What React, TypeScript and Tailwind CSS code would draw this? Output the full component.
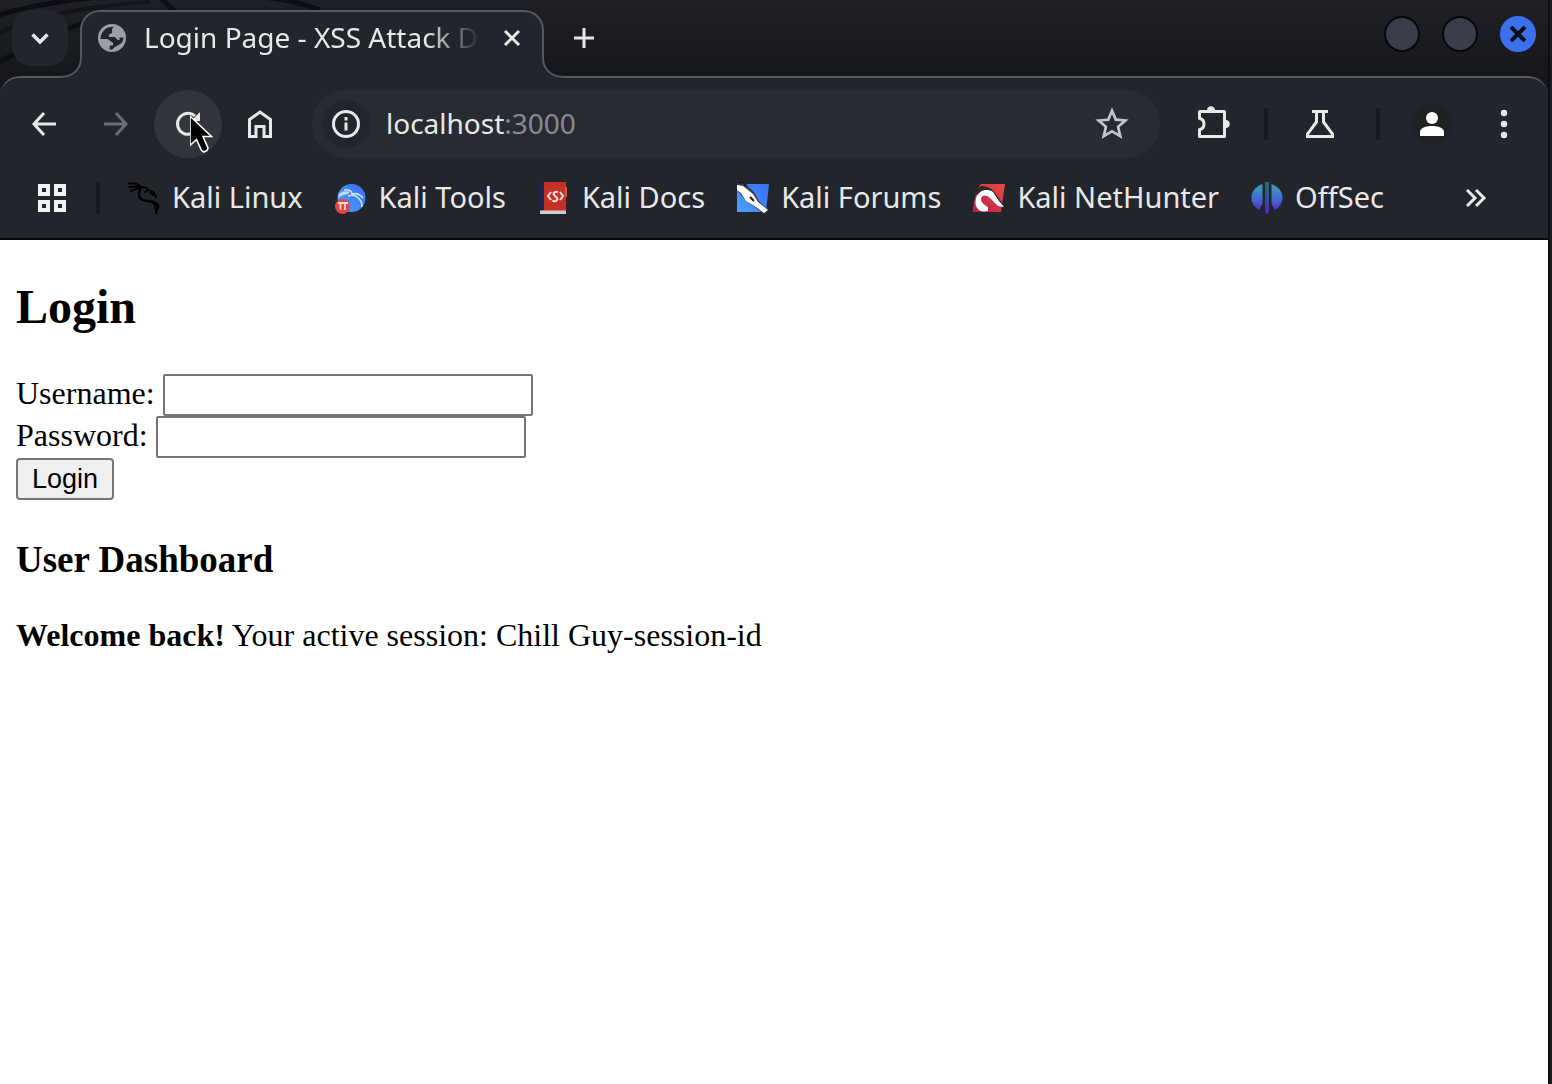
import React from "react";
import { MdStarBorder } from "react-icons/md";

const svg = { fill: "none", stroke: "currentColor", "aria-hidden": true } as const;

function TabBackdrop() {
  return (
    <svg className="absolute inset-0 h-full w-80" viewBox="0 0 320 76" preserveAspectRatio="none" fill="none" aria-hidden="true">
      <path d="M-4 16C40 2 90-2 130-6M-4 64C30 44 70 28 84 22M158-4l18 16M250-4c30 2 50 6 70 14" stroke="#0d0e11" strokeWidth="5" />
      <path d="M-4 34C40 14 90 6 150 2" stroke="#131418" strokeWidth="4" />
    </svg>
  );
}

function Flare({ flip = false }: { flip?: boolean }) {
  return (
    <svg
      className={flip ? "absolute bottom-0 -right-5.5 h-5 w-5.5 -scale-x-100" : "absolute bottom-0 -left-5.5 h-5 w-5.5"}
      viewBox="0 0 22 20"
      aria-hidden="true"
    >
      <path d="M0 20V19C13 19 21 11 21 0H22V20Z" fill="#22252c" />
      <path d="M0 19C13 19 21 11 21 0" fill="none" stroke="#56585d" strokeWidth="2" />
    </svg>
  );
}

function GlobeIcon() {
  return (
    <svg className="size-7 shrink-0" viewBox="0 0 28 28" aria-hidden="true">
      <circle cx="14" cy="14" r="14" fill="#9aa0a6" />
      <path
        d="M10 3.500L15.500 2.500 14 5.500V9L11 10.500V13H17L19.500 16H21.500V13.500H25.500C25.500 17 24 19 21.500 20.500L17 23 14 25.500H11.500L12 21.500H15V19L12.500 17 9.500 15H2.500C2.500 10 5.500 5.500 10 3.500Z"
        fill="#22252c"
      />
      <path d="M3 15.500h6.500l3.500 3v2.500h-2.500v4C6 23.500 3.500 20 3 15.500Z" fill="#9aa0a6" />
    </svg>
  );
}

function ReloadIcon() {
  return (
    <svg {...svg} className="size-7" viewBox="0 0 28 28" strokeWidth="3">
      <path d="M24 17A10.500 10.500 0 1 1 21 6" />
      <path d="M26 2v9h-9Z" fill="currentColor" stroke="none" />
    </svg>
  );
}

function CursorIcon() {
  return (
    <svg className="absolute top-6 left-9 h-10 w-6" viewBox="0 0 24 40" aria-hidden="true">
      <path d="M0 2v29.500l6.500-6 5 11 2.500 1.500 3-1.500 1-2.500-5-11.500h8.500Z" fill="#000" stroke="#fff" strokeWidth="1.600" />
    </svg>
  );
}

function DragonIcon() {
  return (
    <svg className="size-8" viewBox="0 0 32 32" fill="none" stroke="#000" strokeLinecap="round" aria-hidden="true">
      <path d="M0 1.500C5 1 10 2 13 5M1 5c5-1 9-1 12 1M3 9c4-2 7-3 10-3" strokeWidth="2" />
      <path d="M12 5.500C17 4 19 6 21 8.500c3 0 6 3 7 6.500M20 8l-3 2M22 10l3 3" strokeWidth="2" />
      <path d="M13 6C10 10 10 15 14 17.500c4 2 7 1 11 3 2 1.500 3 5 3.500 10.500M20 19c4 0 8 1 10.500 5l-1 3" strokeWidth="2.400" />
    </svg>
  );
}

function ToolsIcon() {
  return (
    <svg className="size-8" viewBox="0 0 32 32" aria-hidden="true">
      <defs>
        <linearGradient id="tools" x1="0" y1="1" x2="1" y2="0">
          <stop offset="0" stopColor="#4ba3fb" />
          <stop offset="1" stopColor="#3a6cf4" />
        </linearGradient>
      </defs>
      <circle cx="16.500" cy="16" r="14" fill="url(#tools)" />
      <path d="M3 15c0-3 4-8 11-6l-2 4c-4 0-6 1-9 4Z" fill="#8fbcf8" />
      <path d="M9 8c6-1 8 2 8 4 4-1 8 0 11 4M13 14c5-2 9 0 12 4 2 2 2 4 2 7M4 14c3-3 6-4 10-3" fill="none" stroke="#cfe3fd" strokeWidth="1.600" />
      <circle cx="7.500" cy="24.500" r="7.500" fill="#e8433f" />
      <path d="M3 21h10M5.500 21v7M10 21v7" stroke="#ffd9d6" strokeWidth="1.800" />
    </svg>
  );
}

function DocsIcon() {
  return (
    <svg className="h-8 w-8" viewBox="0 0 32 32" aria-hidden="true">
      <path d="M4 0h24v32H4Z" fill="#c53127" />
      <path d="M2 0h4v28H2Z" fill="#172750" />
      <path d="M27 3l2 3v9h-2Z" fill="#d5622c" />
      <path d="M2 28.500h26V32H2Z" fill="#d2cbcb" />
      <path d="M13 10l-3 4 3 4M22 10l3 4-3 4M20 10c-3-1-6 1-3.500 3.500s4 3 2 5c-1 1-3 1-4 0" fill="none" stroke="#f6e5e3" strokeWidth="2" />
    </svg>
  );
}

function ForumsIcon() {
  return (
    <svg className="size-8" viewBox="0 0 32 32" aria-hidden="true">
      <defs>
        <linearGradient id="forums" x1="0" y1="1" x2="1" y2="0">
          <stop offset="0" stopColor="#4ba3fb" />
          <stop offset="1" stopColor="#3a6cf4" />
        </linearGradient>
      </defs>
      <path d="M0 2h32l-3 28H0Z" fill="url(#forums)" />
      <path d="M0 0h7l10 10 5 9 9 9-4 4-8-6-10-7L0 8Z" fill="#3b3f46" />
      <path d="M0 3l6 1 10 8 5 8 10 8-4 3-8-6-10-6-5-8-4-3Z" fill="#fff" />
      <path d="M1 1l5-1 3 4M13 15l4 4" stroke="#15171b" strokeWidth="2" fill="none" />
    </svg>
  );
}

function NetHunterIcon() {
  return (
    <svg className="size-8" viewBox="0 0 32 32" aria-hidden="true">
      <defs>
        <linearGradient id="hunter" x1="1" y1="0" x2="0" y2="1">
          <stop offset="0" stopColor="#ed4941" />
          <stop offset="1" stopColor="#b81f4b" />
        </linearGradient>
      </defs>
      <path d="M8 2h24l-4 28H0v-5c2-8 2-15 8-23Z" fill="url(#hunter)" />
      <path d="M2 10l6-6c6 0 10 2 14 7l10 14-8-3C18 12 11 7 4 13Z" fill="#2b2829" />
      <path d="M15 29C5 31 1 25 3 16 6 8 14 6 20 10l6 9 5 6-6-1-8-8c-4-4-9-3-9 1 0 3 2 5 7 8Z" fill="#fff" />
    </svg>
  );
}

function OffSecIcon() {
  return (
    <svg className="size-8" viewBox="0 0 32 32" aria-hidden="true">
      <defs>
        <linearGradient id="offsec" x1="0" y1="0" x2="0" y2="32" gradientUnits="userSpaceOnUse">
          <stop offset="0" stopColor="#3fa6b8" />
          <stop offset="0.500" stopColor="#3f70d2" />
          <stop offset="1" stopColor="#5a1cc4" />
        </linearGradient>
        <linearGradient id="offsecMid" x1="0" y1="0" x2="0" y2="32" gradientUnits="userSpaceOnUse">
          <stop offset="0" stopColor="#2d6a75" />
          <stop offset="0.600" stopColor="#2f4ea0" />
          <stop offset="1" stopColor="#6a1bd0" />
        </linearGradient>
      </defs>
      <path d="M11.500 2v20L8 28C-3 21-2 7 11.500 2ZM20.500 2v20l3.500 6C35 21 34 7 20.500 2Z" fill="url(#offsec)" />
      <path d="M14 0h4v30l-2 2-2-2Z" fill="url(#offsecMid)" />
    </svg>
  );
}

const bookmarks = [
  { label: "Kali Linux", icon: <DragonIcon /> },
  { label: "Kali Tools", icon: <ToolsIcon /> },
  { label: "Kali Docs", icon: <DocsIcon /> },
  { label: "Kali Forums", icon: <ForumsIcon /> },
  { label: "Kali NetHunter", icon: <NetHunterIcon /> },
  { label: "OffSec", icon: <OffSecIcon /> },
];

function ToolButton({ label, className = "", children }: { label: string; className?: string; children: React.ReactNode }) {
  return (
    <button type="button" aria-label={label} className={`relative flex size-17 shrink-0 items-center justify-center rounded-full ${className}`}>
      {children}
    </button>
  );
}

function TabStrip() {
  return (
    <div className="relative flex h-19 items-start bg-linear-to-b from-[#1e2025] to-[#16171b] pt-2.5 pl-3">
      <TabBackdrop />
      <button type="button" aria-label="Search tabs" className="relative flex size-14 items-center justify-center rounded-[20px] bg-[#22252c]">
        <svg {...svg} className="size-6" viewBox="0 0 24 24" strokeWidth="3.500">
          <path d="M4.500 8.500l7.500 7.500 7.500-7.500" />
        </svg>
      </button>
      <div className="relative z-10 ml-3 h-17 w-116 rounded-t-[20px] border-x-2 border-t-2 border-[#56585d] bg-[#22252c]">
        <Flare />
        <Flare flip />
        <div className="flex h-13 items-center pr-3.5 pl-4">
          <GlobeIcon />
          <span className="ml-4.5 min-w-0 flex-1 mask-r-from-84% pb-0.5 text-[28px] leading-10 whitespace-nowrap">
            Login Page - XSS Attack D
          </span>
          <button type="button" aria-label="Close tab" className="ml-4 flex size-8 items-center justify-center">
            <svg {...svg} className="size-5" viewBox="0 0 20 20" strokeWidth="3">
              <path d="M3 3l14 14M17 3L3 17" />
            </svg>
          </button>
        </div>
      </div>
      <button type="button" aria-label="New tab" className="relative ml-3 flex size-14 items-center justify-center">
        <svg {...svg} className="size-6" viewBox="0 0 24 24" strokeWidth="3">
          <path d="M12 2v20M2 12h20" />
        </svg>
      </button>
      <div className="relative ml-auto flex gap-5.5 pt-1.5 pr-3">
        <button type="button" aria-label="Minimize" className="size-9 rounded-full border-2 border-[#07080a] bg-[#3a3e4a]" />
        <button type="button" aria-label="Maximize" className="size-9 rounded-full border-2 border-[#07080a] bg-[#3a3e4a]" />
        <button type="button" aria-label="Close window" className="flex size-9 items-center justify-center rounded-full bg-[#3b70ee] text-[#0c0d12]">
          <svg {...svg} className="size-4" viewBox="0 0 16 16" strokeWidth="4">
            <path d="M1 1l14 14M15 1L1 15" />
          </svg>
        </button>
      </div>
    </div>
  );
}

function Toolbar() {
  return (
    <div className="flex h-23 items-center px-2.5">
      <div className="flex gap-1">
        <ToolButton label="Back">
          <svg {...svg} className="size-7" viewBox="0 0 28 28" strokeWidth="3">
            <path d="M26 14H4M14 3L4 14l10 11" />
          </svg>
        </ToolButton>
        <ToolButton label="Forward" className="text-[#6b6d72]">
          <svg {...svg} className="size-7" viewBox="0 0 28 28" strokeWidth="3">
            <path d="M2 14h22M14 3l10 11-10 11" />
          </svg>
        </ToolButton>
        <ToolButton label="Reload" className="bg-[#33353d]">
          <ReloadIcon />
          <CursorIcon />
        </ToolButton>
        <ToolButton label="Home">
          <svg {...svg} className="size-7" viewBox="0 0 28 28" strokeWidth="3">
            <path d="M3.500 26.500V9.500L14 2l10.500 7.500v17H18V16.500h-8v10Z" />
          </svg>
        </ToolButton>
      </div>
      <div className="mx-4.5 flex h-17 flex-1 items-center rounded-full bg-[#282b33] pr-7 pl-2.5">
        <button type="button" aria-label="View site information" className="flex size-12 items-center justify-center rounded-full bg-[#22252c]">
          <svg {...svg} className="size-7" viewBox="0 0 28 28" strokeWidth="3">
            <circle cx="14" cy="14" r="12.500" />
            <path d="M14 12.500v8M14 7v3.500" />
          </svg>
        </button>
        <div className="ml-4 flex-1 pb-0.5 text-[28px] leading-10">
          <span>localhost</span>
          <span className="text-[#888a8f]">:3000</span>
        </div>
        <button type="button" aria-label="Bookmark this tab" className="text-[#c4c5c7]">
          <MdStarBorder className="size-10" />
        </button>
      </div>
      <ToolButton label="Extensions">
        <svg {...svg} className="size-9" viewBox="0 0 36 36" strokeWidth="3">
          <path d="M5.500 5.500h25v25h-25v-7c6-1 6-10 0-11Z" strokeLinejoin="round" />
          <path d="M13 4c0-5 8-5 8 0ZM32 14c5 0 5 8 0 8Z" fill="currentColor" stroke="none" />
        </svg>
      </ToolButton>
      <span className="mx-4.5 h-8 w-1 bg-[#17191d]" />
      <ToolButton label="Chrome Labs">
        <svg {...svg} className="size-8" viewBox="0 0 32 32" strokeWidth="3">
          <path d="M8 3.500h16M12.500 4v10L3.500 26v2.500h25V26l-9-12V4" />
        </svg>
      </ToolButton>
      <span className="mr-4.5 ml-5.5 h-8 w-1 bg-[#17191d]" />
      <ToolButton label="Profile">
        <span className="flex size-10 items-center justify-center rounded-full bg-[#202122] text-white">
          <svg className="size-6" viewBox="0 0 24 24" fill="currentColor" aria-hidden="true">
            <circle cx="12" cy="6" r="6" />
            <path d="M0 24v-4c0-4 6-6 12-6s12 2 12 6v4Z" />
          </svg>
        </span>
      </ToolButton>
      <ToolButton label="Menu" className="ml-1">
        <svg className="size-8" viewBox="0 0 32 32" fill="currentColor" aria-hidden="true">
          <circle cx="16" cy="5" r="3.200" />
          <circle cx="16" cy="16" r="3.200" />
          <circle cx="16" cy="27" r="3.200" />
        </svg>
      </ToolButton>
    </div>
  );
}

function BookmarksBar() {
  return (
    <nav aria-label="Bookmarks" className="flex h-17 items-start pr-15 pl-9.5">
      <button type="button" aria-label="Apps" className="flex h-14 items-center">
        <span className="grid grid-cols-2 gap-1">
          <span className="size-3 border-4 border-[#f1f1f1]" />
          <span className="size-3 border-4 border-[#f1f1f1]" />
          <span className="size-3 border-4 border-[#f1f1f1]" />
          <span className="size-3 border-4 border-[#f1f1f1]" />
        </span>
      </button>
      <span className="mt-3 mr-7 ml-7.5 h-8 w-1 bg-[#17191d]" />
      <div className="flex gap-8">
        {bookmarks.map((b) => (
          <a key={b.label} href="#" className="flex h-14 items-center gap-3 text-[29px] leading-10 whitespace-nowrap">
            {b.icon}
            <span className="pb-0.5">{b.label}</span>
          </a>
        ))}
      </div>
      <button type="button" aria-label="More bookmarks" className="ml-auto flex h-14 items-center">
        <svg {...svg} className="size-6" viewBox="0 0 24 24" strokeWidth="3">
          <path d="M3 4l8 8-8 8M12 4l8 8-8 8" />
        </svg>
      </button>
    </nav>
  );
}

function LoginPage() {
  const field = "h-10.5 w-92.5 rounded-xs border-2 border-[#767676] bg-white px-1 text-[27px] outline-none";
  return (
    <main className="flex-1 bg-white px-4 font-['Liberation_Serif',serif] text-[32px] text-black">
      <h2 className="pt-10 text-[48px] leading-[54px] font-bold">Login</h2>
      <form className="mt-10" onSubmit={(e) => e.preventDefault()}>
        <div className="flex items-start gap-2">
          <label htmlFor="username" className="leading-[38px]">Username:</label>
          <input id="username" type="text" className={field} />
        </div>
        <div className="flex items-start gap-2">
          <label htmlFor="password" className="leading-[38px]">Password:</label>
          <input id="password" type="password" className={field} />
        </div>
        <button type="submit" className="block h-10.5 rounded-sm border-2 border-[#767676] bg-[#efefef] px-3.5 font-['Liberation_Sans',sans-serif] text-[27px] leading-9">
          Login
        </button>
      </form>
      <h3 className="mt-9 text-[37px] leading-[48px] font-bold">User Dashboard</h3>
      <p className="mt-8 leading-[38px]">
        <b>Welcome back!</b> Your active session: Chill Guy-session-id
      </p>
    </main>
  );
}

export default function App() {
  return (
    <div className="flex min-h-screen bg-[#16171b] font-['Noto_Sans',sans-serif] text-[#e8e8e6]">
      <div className="flex min-w-0 flex-1 flex-col">
        <TabStrip />
        <div className="bg-[#16171b]">
          <header className="rounded-t-[20px] border-t-2 border-b-2 border-t-[#56585d] border-b-[#08090b] bg-[#22252c]">
            <Toolbar />
            <BookmarksBar />
          </header>
        </div>
        <LoginPage />
      </div>
      <div className="w-1 shrink-0 border-l-2 border-[#0c0d10] bg-[#1c1d22]" />
    </div>
  );
}
